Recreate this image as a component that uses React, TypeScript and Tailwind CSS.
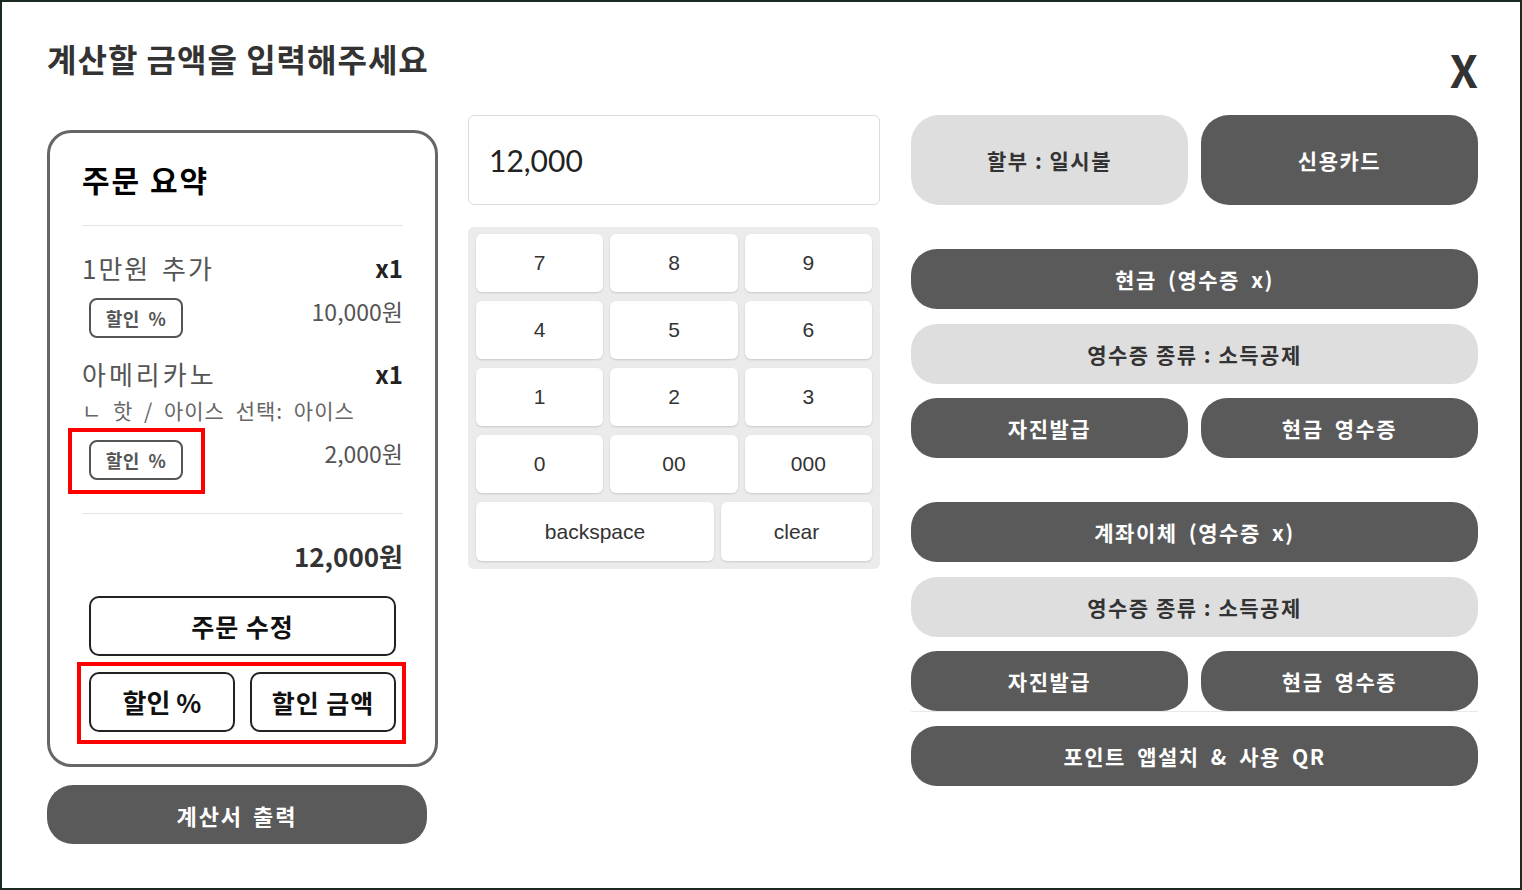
const kr = "font-['Noto_Sans_CJK_KR',sans-serif]";

const keys = ["7", "8", "9", "4", "5", "6", "1", "2", "3", "0", "00", "000"];

function Badge({ marked }: { marked?: boolean }) {
  return (
    <div className="relative ml-[7px]">
      <div className="flex h-[40px] w-[94px] items-center justify-center rounded-lg border-2 border-[#555] text-[18px] font-bold leading-none tracking-[0.5px] text-[#555] [word-spacing:4px]">
        할인 %
      </div>
      {marked && (
        <div className="pointer-events-none absolute -top-[12px] -right-[22px] -bottom-[14px] -left-[21px] border-4 border-[#ff0000]" />
      )}
    </div>
  );
}

function PayButton({ label, light, tall, tight }: { label: string; light?: boolean; tall?: boolean; tight?: boolean }) {
  return (
    <button
      className={`flex flex-1 items-center justify-center text-[21px] font-bold leading-none tracking-[1.5px] ${
        tight ? "[word-spacing:0px]" : "[word-spacing:5px]"
      } ${tall ? "h-[90px] rounded-[28px]" : "h-[60px] rounded-[26px]"} ${
        light ? "bg-[#dedede] text-[#333]" : "bg-[#5a5a5a] text-white"
      }`}
    >
      {label}
    </button>
  );
}

export default function App() {
  return (
    <div className={`h-[890px] w-[1522px] border-2 border-[#1b2a20] bg-white pr-[42px] pl-[45px] ${kr}`}>
      <div className="flex h-[113px] items-start justify-between">
        <h1 className="pt-[40px] text-[32px] font-bold leading-none tracking-[1px] text-[#333]">계산할 금액을 입력해주세요</h1>
        <button className="mt-[44px] text-[45px] font-bold leading-none text-[#333]">X</button>
      </div>

      <div className="flex">
        {/* order summary */}
        <div className="mt-[15px] w-[391px] shrink-0">
          <div className="rounded-[24px] border-[3px] border-[#666] px-8 pb-[32px]">
            <div className="flex h-[93px] items-center border-b border-[#e5e5e5] text-[30px] font-bold leading-none tracking-[2px] text-black">
              주문 요약
            </div>

            <div className="mt-[26px] flex h-[32px] items-center justify-between">
              <span className="text-[26px] leading-none tracking-[2px] text-[#555] [word-spacing:4px]">1만원 추가</span>
              <span className="text-[24px] font-bold leading-none text-[#222]">x1</span>
            </div>
            <div className="mt-[14px] flex items-start justify-between">
              <Badge />
              <span className="text-[23px] leading-[26px] text-[#555]">10,000원</span>
            </div>

            <div className="mt-[20px] flex h-[32px] items-center justify-between">
              <span className="text-[26px] leading-none tracking-[3px] text-[#555]">아메리카노</span>
              <span className="text-[24px] font-bold leading-none text-[#222]">x1</span>
            </div>
            <div className="mt-[7px] flex h-[26px] items-center text-[21px] leading-none tracking-[1px] text-[#666] [word-spacing:5px]">
              ㄴ 핫 / 아이스 선택: 아이스
            </div>
            <div className="mt-[17px] flex items-start justify-between">
              <Badge marked />
              <span className="text-[23px] leading-[26px] text-[#555]">2,000원</span>
            </div>

            <div className="mt-[33px] border-t border-[#e5e5e5]" />

            <div className="mt-[27px] flex h-[30px] items-center justify-end text-[26px] font-bold leading-none text-[#333]">
              12,000원
            </div>

            <div className="mx-[7px] mt-[25px]">
              <button className="flex h-[60px] w-full items-center justify-center rounded-[10px] border-2 border-[#222] text-[25px] font-bold leading-none tracking-[1px] text-[#111]">
                주문 수정
              </button>
              <div className="relative mt-[16px] flex gap-[15px]">
                <button className="flex h-[60px] flex-1 items-center justify-center rounded-[10px] border-2 border-[#222] text-[26px] font-bold leading-none text-[#111]">
                  할인 %
                </button>
                <button className="flex h-[60px] flex-1 items-center justify-center rounded-[10px] border-2 border-[#222] text-[25px] font-bold leading-none tracking-[1px] text-[#111]">
                  할인 금액
                </button>
                <div className="pointer-events-none absolute -top-[10px] -right-[10px] -bottom-[12px] -left-[12px] border-4 border-[#ff0000]" />
              </div>
            </div>
          </div>

          <button className="mt-[18px] flex h-[59px] w-[380px] items-center justify-center rounded-[26px] bg-[#5a5a5a] text-[22px] font-bold leading-none tracking-[2px] text-white [word-spacing:3px]">
            계산서 출력
          </button>
        </div>

        {/* keypad */}
        <div className="ml-[30px] w-[412px] shrink-0">
          <div className="flex h-[90px] items-center rounded-md border border-[#dcdcdc] px-5 font-['Lato',sans-serif] text-[30px] text-[#222]">
            12,000
          </div>
          <div className="mt-[22px] rounded-md bg-[#ebebeb] px-2 pt-[7px] pb-2 font-['Liberation_Sans',Arial,sans-serif] text-[21px] text-[#333]">
            <div className="grid grid-cols-3 gap-x-[7px] gap-y-[9px]">
              {keys.map((k) => (
                <button
                  key={k}
                  className="flex h-[58px] items-center justify-center rounded-md bg-white shadow-[0_1px_2px_rgba(0,0,0,0.15)]"
                >
                  {k}
                </button>
              ))}
            </div>
            <div className="mt-[9px] flex gap-[7px]">
              <button className="flex h-[59px] flex-1 items-center justify-center rounded-md bg-white shadow-[0_1px_2px_rgba(0,0,0,0.15)]">
                backspace
              </button>
              <button className="flex h-[59px] w-[151px] items-center justify-center rounded-md bg-white shadow-[0_1px_2px_rgba(0,0,0,0.15)]">
                clear
              </button>
            </div>
          </div>
        </div>

        {/* payment methods */}
        <div className="ml-[31px] flex w-[567px] shrink-0 flex-col">
          <div className="flex gap-[13px]">
            <PayButton label="할부 : 일시불" light tall tight />
            <PayButton label="신용카드" tall />
          </div>

          <div className="mt-[44px] flex">
            <PayButton label="현금 (영수증 x)" />
          </div>
          <div className="mt-[15px] flex">
            <PayButton label="영수증 종류 : 소득공제" light tight />
          </div>
          <div className="mt-[14px] flex gap-[13px]">
            <PayButton label="자진발급" />
            <PayButton label="현금 영수증" />
          </div>

          <div className="mt-[44px] flex">
            <PayButton label="계좌이체 (영수증 x)" />
          </div>
          <div className="mt-[15px] flex">
            <PayButton label="영수증 종류 : 소득공제" light tight />
          </div>
          <div className="mt-[14px] flex gap-[13px] border-b border-[#e8e8e8]">
            <PayButton label="자진발급" />
            <PayButton label="현금 영수증" />
          </div>
          <div className="mt-[14px] flex">
            <PayButton label="포인트 앱설치 & 사용 QR" />
          </div>
        </div>
      </div>
    </div>
  );
}
